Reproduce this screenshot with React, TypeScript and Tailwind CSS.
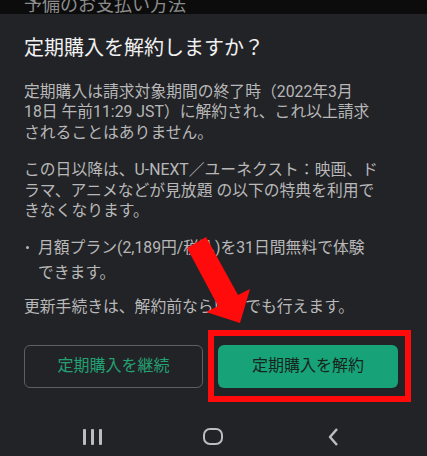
import React from 'react';

const font = { fontFamily: 'Roboto, "Noto Sans CJK JP", sans-serif' };

const App = () => {
  return (
    <div className="relative w-[427px] h-[456px] overflow-hidden bg-[#222327]" style={font}>
      {/* page behind the sheet */}
      <div className="h-[14px] overflow-hidden bg-[#0c0c0d]">
        <div className="mt-[-6px] pl-6 text-[18px] leading-[22px] text-[#8c8c8c]">予備のお支払い方法</div>
      </div>

      <div className="pt-5 pl-6 pr-[24px]">
        <h1 className="text-[20px] leading-[28px] text-[#f1f1f1]">定期購入を解約しますか？</h1>

        <div className="mt-5 text-[15.8px] leading-[20.4px] text-[#b8b8b8] whitespace-nowrap">
          <p>
            定期購入は請求対象期間の終了時（2022年3月<br />
            18日 午前11:29 JST）に解約され、これ以上請求<br />
            されることはありません。
          </p>
          <p className="mt-[17px]">
            この日以降は、U-NEXT／ユーネクスト：映画、ド<br />
            ラマ、アニメなどが見放題 の以下の特典を利用で<br />
            きなくなります。
          </p>
          <div className="mt-[14px] flex leading-[25px]">
            <span className="w-[14px] h-[25px] shrink-0 flex items-center pl-[2px]">
              <span className="w-[3px] h-[3px] rounded-full bg-[#b8b8b8]" />
            </span>
            <span>
              月額プラン(2,189円/税込)を31日間無料で体験<br />
              できます。
            </span>
          </div>
          <p className="mt-[12px]">更新手続きは、解約前ならいつでも行えます。</p>
        </div>
      </div>

      <div className="mt-[27px] pl-6 pr-[29px] flex gap-[15px]">
        <button className="w-[179px] h-[43px] rounded-[6px] border border-[#5e5f61] text-[16px] text-[#22a172]">
          定期購入を継続
        </button>
        <div className="relative">
          <button className="w-[180px] h-[43px] rounded-[6px] bg-[#17a277] text-[16px] text-[#17251f]">
            定期購入を解約
          </button>
          <div className="absolute left-[-10px] right-[-13px] top-[-15px] bottom-[-14px] border-[6px] border-[#ff0b0b]" />
        </div>
      </div>

      {/* system nav bar */}
      <div className="mt-[31px] flex items-center h-[36px]">
        <div className="w-[185px] flex justify-center gap-[5px]">
          <span className="w-[3px] h-[16px] bg-[#bdbdbd] rounded-[1px]" />
          <span className="w-[3px] h-[16px] bg-[#bdbdbd] rounded-[1px]" />
          <span className="w-[3px] h-[16px] bg-[#bdbdbd] rounded-[1px]" />
        </div>
        <div className="w-[56px] flex justify-center">
          <span className="w-[20px] h-[17px] rounded-[7px] border-[2.5px] border-[#bdbdbd]" />
        </div>
        <div className="w-[186px] flex justify-center">
          <svg width="14" height="20" viewBox="0 0 14 20">
            <path d="M10 2 L3 10 L10 18" fill="none" stroke="#bdbdbd" strokeWidth="2.5" strokeLinejoin="round" />
          </svg>
        </div>
      </div>

      {/* annotation arrow */}
      <svg className="absolute inset-0 pointer-events-none" width="427" height="456" viewBox="0 0 427 456">
        <polygon
          points="206,237 238,295 250,289 240,323 206,312 218,306 187,248"
          fill="#ff0b0b"
        />
      </svg>
    </div>
  );
};

export default App;
